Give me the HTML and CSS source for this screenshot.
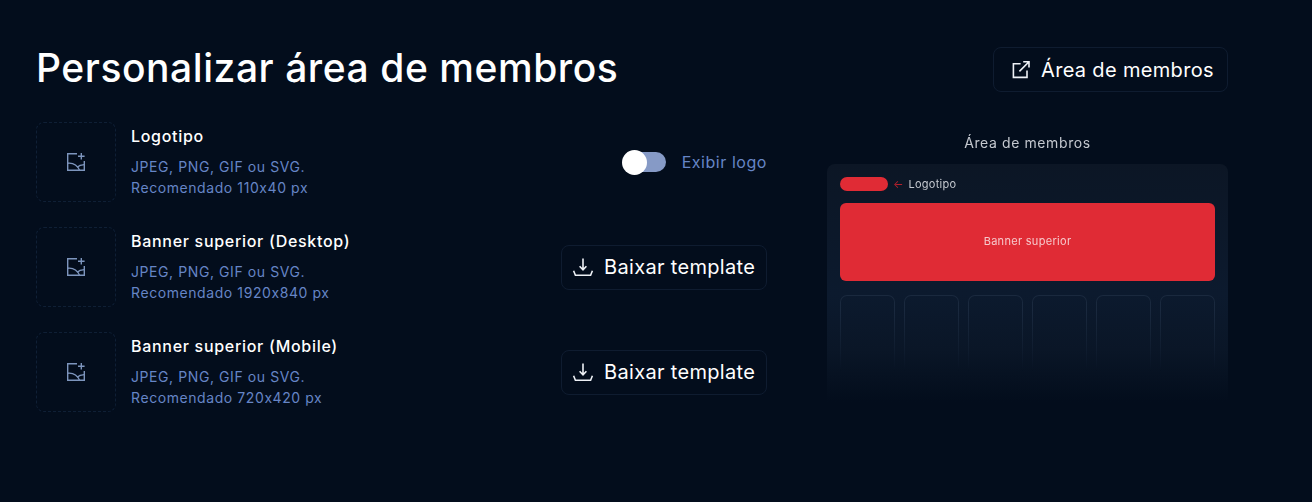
FILE: index.html
```html
<!DOCTYPE html>
<html lang="pt-BR">

<head>
  <meta charset="utf-8">
  <title>Personalizar área de membros</title>
  <link rel="stylesheet" href="styles.css">
</head>

<body>
  <svg class="icon-defs" xmlns="http://www.w3.org/2000/svg" width="0" height="0">
    <defs>
      <symbol id="iconImageAdd" viewBox="0 0 20 20">
        <path d="M11 1.7H1.7V18.3H18.3V9" />
        <path d="M15.3 1V7.6M12 4.3H18.6" />
        <path d="M1.7 11.2C7.5 10.6 11.5 13.6 13.5 18.3" />
        <path d="M18.3 12.6C15.2 12.8 12.8 13.6 11.2 15.2" />
      </symbol>
      <symbol id="iconDownload" viewBox="0 0 22 22">
        <path d="M11 2.6V13.6M7.6 10.2L11 13.8L14.4 10.2" />
        <path d="M1.6 14.8L3.4 19.2H18.6L20.4 14.8" />
      </symbol>
      <symbol id="iconExternal" viewBox="0 0 22 22">
        <path d="M10.6 4.8H3.4V18.4H17V11.4" />
        <path d="M9.4 12.4L19 2.8M13.2 2.8H19V8.6" />
      </symbol>
    </defs>
  </svg>

  <div class="page">
    <header class="page-header">
      <h1 class="page-title">Personalizar área de membros</h1>
      <a class="outline-btn members-btn">
        <svg class="btn-icon"><use href="#iconExternal" /></svg>
        Área de membros
      </a>
    </header>

    <div class="content">
      <section class="uploads">
        <div class="upload-row">
          <div class="thumb"><svg class="thumb-icon"><use href="#iconImageAdd" /></svg></div>
          <div class="upload-info">
            <h2 class="upload-title">Logotipo</h2>
            <p class="upload-desc">JPEG, PNG, GIF ou SVG.<br>Recomendado 110x40 px</p>
          </div>
          <label class="toggle-wrap">
            <span class="toggle"><span class="toggle-knob"></span></span>
            Exibir logo
          </label>
        </div>

        <div class="upload-row">
          <div class="thumb"><svg class="thumb-icon"><use href="#iconImageAdd" /></svg></div>
          <div class="upload-info">
            <h2 class="upload-title">Banner superior (Desktop)</h2>
            <p class="upload-desc">JPEG, PNG, GIF ou SVG.<br>Recomendado 1920x840 px</p>
          </div>
          <a class="outline-btn template-btn">
            <svg class="btn-icon"><use href="#iconDownload" /></svg>
            Baixar template
          </a>
        </div>

        <div class="upload-row">
          <div class="thumb"><svg class="thumb-icon"><use href="#iconImageAdd" /></svg></div>
          <div class="upload-info">
            <h2 class="upload-title">Banner superior (Mobile)</h2>
            <p class="upload-desc">JPEG, PNG, GIF ou SVG.<br>Recomendado 720x420 px</p>
          </div>
          <a class="outline-btn template-btn">
            <svg class="btn-icon"><use href="#iconDownload" /></svg>
            Baixar template
          </a>
        </div>
      </section>

      <aside class="preview">
        <div class="preview-label">Área de membros</div>
        <div class="preview-card">
          <div class="preview-top">
            <span class="preview-logo"></span>
            <span class="preview-arrow">←</span>
            <span class="preview-logo-text">Logotipo</span>
          </div>
          <div class="preview-banner">Banner superior</div>
          <div class="preview-tiles">
            <div class="preview-tile"></div>
            <div class="preview-tile"></div>
            <div class="preview-tile"></div>
            <div class="preview-tile"></div>
            <div class="preview-tile"></div>
            <div class="preview-tile"></div>
          </div>
        </div>
      </aside>
    </div>
  </div>
</body>

</html>
```

FILE: styles.css
```css
body {
  margin: 0;
  height: 502px;
  overflow: hidden;
  background-color: #030d1c;
  color: #fff;
  font-family: Inter, "Liberation Sans", sans-serif;
  font-feature-settings: "calt" 0;
}

.icon-defs {
  display: block;
  height: 0;
}

.page {
  width: 1192px;
  padding: 47px 0 0 36px;
}

.page-header {
  display: flex;
  align-items: center;
  justify-content: space-between;
}

.page-title {
  margin: 0;
  padding-bottom: 3px;
  font-size: 39px;
  font-weight: 500;
  line-height: 42px;
  letter-spacing: 0.55px;
}

.outline-btn {
  display: flex;
  align-items: center;
  box-sizing: border-box;
  height: 45px;
  border: 1px solid #0f1c30;
  border-radius: 8px;
  font-size: 20px;
  letter-spacing: 0.33px;
  color: #fff;
  white-space: nowrap;
}

.btn-icon {
  width: 22px;
  height: 22px;
  fill: none;
  stroke: #eef1f6;
  stroke-width: 1.6;
}

.members-btn {
  width: 235px;
  padding-left: 16px;
  gap: 9px;
}

.template-btn {
  width: 206px;
  margin-left: auto;
  padding-left: 10px;
  gap: 10px;
}

.content {
  display: flex;
  gap: 60px;
  margin-top: 30px;
}

.uploads {
  display: flex;
  flex-direction: column;
  gap: 25px;
  width: 731px;
}

.upload-row {
  display: flex;
  align-items: center;
}

.thumb {
  display: flex;
  align-items: center;
  justify-content: center;
  flex: none;
  box-sizing: border-box;
  width: 80px;
  height: 80px;
  border: 1px dashed #0f1f35;
  border-radius: 8px;
}

.thumb-icon {
  width: 20px;
  height: 20px;
  fill: none;
  stroke: #7d95bd;
  stroke-width: 1.4;
}

.upload-info {
  align-self: flex-start;
  margin-left: 15px;
  padding-top: 4px;
}

.upload-title {
  margin: 0;
  font-size: 16px;
  font-weight: 500;
  line-height: 20px;
  letter-spacing: 0.7px;
}

.upload-desc {
  margin: 10px 0 0;
  font-size: 14px;
  line-height: 21px;
  letter-spacing: 0.58px;
  color: #6685c6;
}

.toggle-wrap {
  display: flex;
  align-items: center;
  gap: 16px;
  margin-left: auto;
  font-size: 16px;
  letter-spacing: 0.55px;
  color: #6685c6;
}

.toggle {
  position: relative;
  display: block;
  width: 40px;
  height: 20px;
  border-radius: 10px;
  background-color: #869ac6;
}

.toggle-knob {
  position: absolute;
  top: -2.5px;
  left: -4px;
  width: 25px;
  height: 25px;
  border-radius: 50%;
  background-color: #fff;
}

.preview {
  width: 401px;
  padding-top: 12px;
}

.preview-label {
  font-size: 14px;
  line-height: 18px;
  letter-spacing: 0.6px;
  text-align: center;
  color: #c4c8cf;
  filter: blur(0.3px);
}

.preview-card {
  box-sizing: border-box;
  height: 238px;
  margin-top: 12px;
  padding: 13px;
  overflow: hidden;
  border-radius: 8px 8px 0 0;
  background: linear-gradient(#0c1625, #0c1a2e 55%, #0a1627 78%, #030d1c);
  filter: blur(0.4px);
}

.preview-top {
  display: flex;
  align-items: center;
  height: 14px;
}

.preview-logo {
  width: 48px;
  height: 14px;
  border-radius: 7px;
  background-color: #e02b35;
}

.preview-arrow {
  margin-left: 5px;
  font-size: 11px;
  color: #b3202c;
}

.preview-logo-text {
  margin-left: 5px;
  font-size: 11px;
  letter-spacing: 0.25px;
  color: #c4c8cf;
}

.preview-banner {
  display: flex;
  align-items: center;
  justify-content: center;
  box-sizing: border-box;
  height: 78px;
  margin-top: 12px;
  padding-bottom: 2px;
  border-radius: 6px;
  background-color: #e02b35;
  font-size: 11px;
  letter-spacing: 0.3px;
  color: #f6c9cc;
}

.preview-tiles {
  display: flex;
  justify-content: space-between;
  margin-top: 14px;
  -webkit-mask-image: linear-gradient(#000 20%, transparent 100%);
  mask-image: linear-gradient(#000 20%, transparent 100%);
}

.preview-tile {
  box-sizing: border-box;
  width: 55px;
  height: 76px;
  border: 1.5px solid #1a293e;
  border-bottom: 0;
  border-radius: 7px 7px 0 0;
}
```
